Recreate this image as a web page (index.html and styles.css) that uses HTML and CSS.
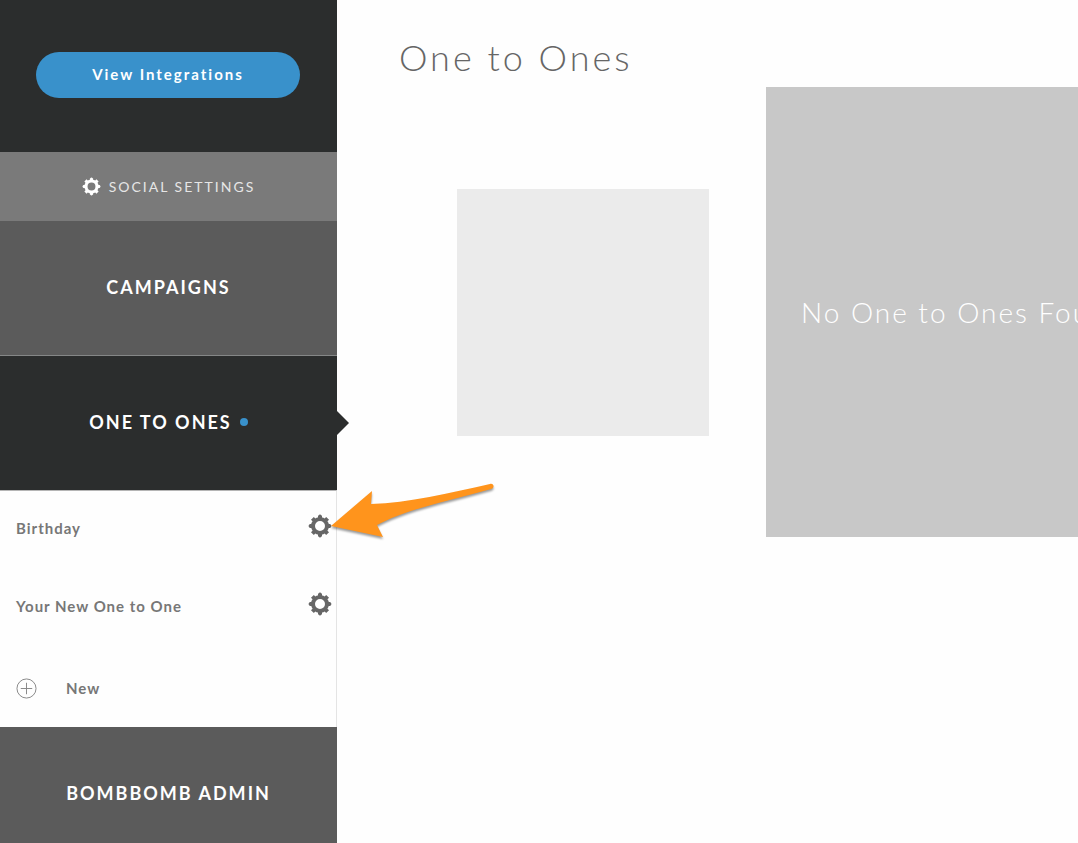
FILE: index.html
```html
<!DOCTYPE html>
<html lang="en">
<head>
    <meta charset="UTF-8">
    <meta name="viewport" content="width=device-width, initial-scale=1.0">
    <title>One to Ones</title>
    <link rel="stylesheet" href="styles.css">
</head>
<body>
    <!-- shared icons -->
    <svg class="sprite" aria-hidden="true">
        <symbol id="gear" viewBox="0 0 24 24">
            <g fill="none" stroke="currentColor">
                <circle cx="12" cy="12" r="7" stroke-width="4"/>
                <path stroke-width="4" d="M12 4.500V1.500M12 19.500v3M4.500 12h-3M19.500 12h3M6.700 6.700L4.400 4.400M17.300 6.700l2.300-2.300M6.700 17.300l-2.300 2.300M17.300 17.300l2.300 2.300"/>
                <path stroke-width="2.400" stroke-linecap="round" d="M12 3V1.800M12 21v1.200M3 12H1.800M21 12h1.200"/>
            </g>
        </symbol>
    </svg>

    <div class="page">
        <nav class="sidebar">
            <div class="integrations">
                <button type="button" class="pill">View Integrations</button>
            </div>
            <a href="#social" class="social">
                <svg class="gear-small"><use href="#gear"/></svg>
                Social Settings
            </a>
            <a href="#campaigns" class="section">Campaigns</a>
            <a href="#one-to-ones" class="section active">One to Ones <span class="dot"></span></a>

            <ul class="list">
                <li class="item">
                    <a href="#birthday">Birthday</a>
                    <button type="button" class="gear-btn" aria-label="Birthday settings"><svg class="gear"><use href="#gear"/></svg></button>
                    <svg class="arrow" viewBox="0 0 170 64" aria-hidden="true">
                        <path fill="#ff941c" d="M2 43L43 8L42 21C80 20 120 10 161 1C165 0 166 5 162 6C125 17 80 25 48 42L54 54Z"/>
                    </svg>
                </li>
                <li class="item">
                    <a href="#new-one-to-one">Your New One to One</a>
                    <button type="button" class="gear-btn" aria-label="One to One settings"><svg class="gear"><use href="#gear"/></svg></button>
                </li>
                <li class="item">
                    <a href="#new" class="new">
                        <svg class="plus" viewBox="0 0 22 22" fill="none" stroke="#858585"><circle cx="11" cy="11" r="10"/><path d="M11 5v12M5 11h12"/></svg>
                        New
                    </a>
                </li>
            </ul>

            <a href="#admin" class="section">BombBomb Admin</a>
        </nav>

        <main class="content">
            <h1>One to Ones</h1>
            <div class="boards">
                <div class="preview"></div>
                <div class="empty">No One to Ones Found</div>
            </div>
        </main>
    </div>
</body>
</html>
```

FILE: styles.css
```css
* {
    box-sizing: border-box;
}
body {
    margin: 0;
    font-family: Lato, "Open Sans", sans-serif;
    background-color: #fefefe;
    color: #777;
}
a {
    color: inherit;
    text-decoration: none;
}
button {
    border: none;
    font-family: inherit;
    cursor: pointer;
}
.sprite {
    display: none;
}
.page {
    display: flex;
    height: 100vh;
    overflow: hidden;
}

/* Sidebar */
.sidebar {
    flex: 0 0 337px;
    display: flex;
    flex-direction: column;
    position: relative;
    z-index: 1;
}
.integrations {
    flex: none;
    padding: 52px 37px 54px 36px;
    background-color: #2b2d2d;
}
.pill {
    display: block;
    width: 100%;
    height: 46px;
    padding: 0 0 3px;
    border-radius: 23px;
    background-color: #3991cb;
    color: #fff;
    font-size: 15px;
    font-weight: bold;
    letter-spacing: 2px;
}
.social {
    flex: none;
    display: flex;
    align-items: center;
    justify-content: center;
    gap: 8px;
    height: 69px;
    padding-bottom: 1px;
    background-color: #7a7a7a;
    color: #e6e6e6;
    font-size: 14px;
    letter-spacing: 2px;
    text-transform: uppercase;
}
.gear-small {
    width: 19px;
    height: 19px;
    color: #fff;
}
.section {
    flex: none;
    display: flex;
    align-items: center;
    justify-content: center;
    gap: 8px;
    position: relative;
    height: 134px;
    padding-bottom: 3px;
    background-color: #5b5b5b;
    color: #fff;
    font-size: 18px;
    font-weight: bold;
    letter-spacing: 2px;
    text-transform: uppercase;
}
.active {
    height: 135px;
    border-top: 1px solid #858787;
    background-color: #2b2d2d;
}
.active::after {
    content: "";
    position: absolute;
    left: 100%;
    top: 50%;
    margin-top: -12px;
    border: 12px solid transparent;
    border-left-color: #2b2d2d;
    border-right-width: 0;
}
.dot {
    width: 8px;
    height: 8px;
    border-radius: 50%;
    background-color: #3991cb;
}
.list {
    flex: none;
    margin: 0;
    padding: 0;
    list-style: none;
    background-color: #fefefe;
    border-top: 1px solid #b5b5b5;
    border-right: 1px solid #e4e4e4;
}
.item {
    display: flex;
    align-items: center;
    justify-content: space-between;
    position: relative;
    height: 78px;
    padding: 0 4px 4px 16px;
    font-size: 15px;
    font-weight: bold;
    letter-spacing: 1px;
}
.gear-btn {
    padding: 0 0 4px;
    background: none;
    color: #666;
}
.gear {
    display: block;
    width: 24px;
    height: 24px;
}
.item:last-child {
    height: 80px;
    padding-top: 2px;
    padding-bottom: 0;
}
.new {
    display: flex;
    align-items: center;
    gap: 29px;
}
.plus {
    width: 21px;
    height: 21px;
}
/* pointer laid over the first gear */
.arrow {
    position: absolute;
    left: 329px;
    top: -8px;
    width: 170px;
    height: 64px;
    filter: drop-shadow(0 2px 1px rgba(0, 0, 0, 0.4));
    pointer-events: none;
}

/* Content */
.content {
    flex: 1;
    min-width: 0;
    padding: 35px 0 0 62px;
}
h1 {
    margin: 0;
    font-size: 36px;
    line-height: 44px;
    font-weight: 300;
    letter-spacing: 3px;
    color: #666;
}
.boards {
    display: flex;
    align-items: flex-start;
    gap: 57px;
    margin-top: 8px;
    padding-left: 58px;
}
.preview {
    flex: none;
    width: 252px;
    height: 247px;
    margin-top: 102px;
    background-color: #ebebeb;
}
.empty {
    flex: none;
    display: flex;
    align-items: center;
    height: 450px;
    padding: 0 35px;
    background-color: #c8c8c8;
    color: #fff;
    font-size: 28px;
    font-weight: 300;
    letter-spacing: 2px;
    white-space: nowrap;
}
```
